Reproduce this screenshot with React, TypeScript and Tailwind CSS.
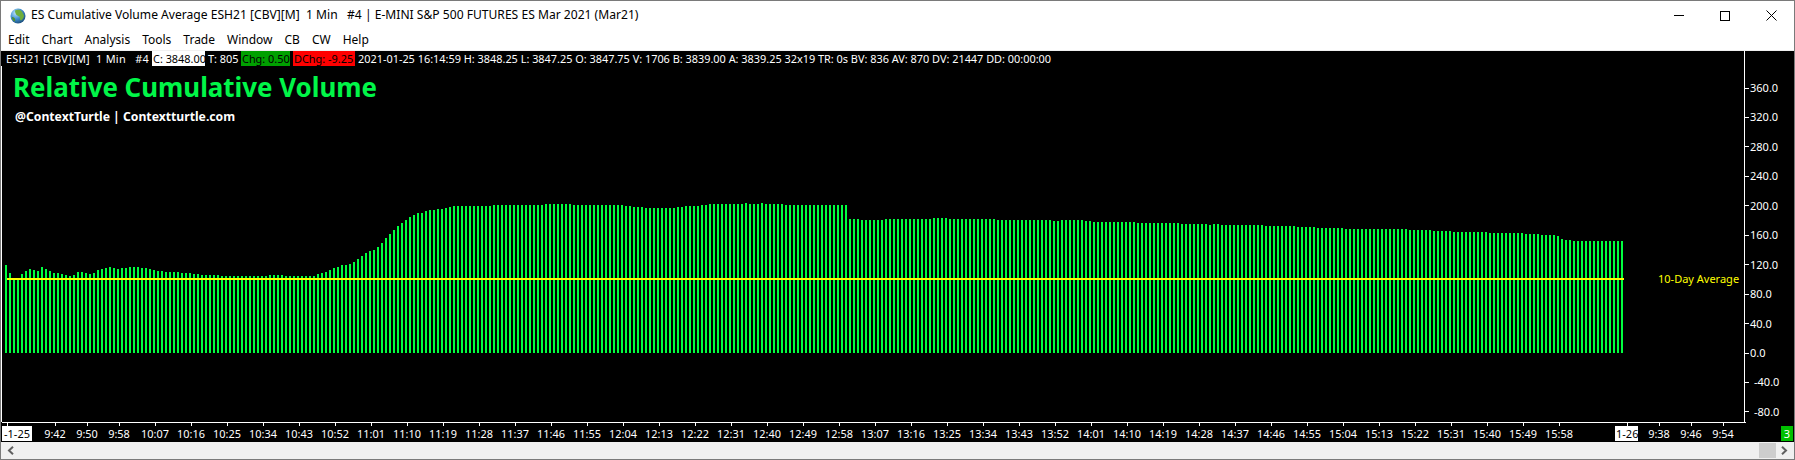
const font = '[font-family:"Noto_Sans",sans-serif]'

// bar tops as [pageY, count], one bar every 4px starting at x=5
const SEGMENTS: [number, number][] = [
  [265, 1], [273, 1], [279, 2], [274, 1], [271, 1], [269, 1], [270, 1], [271, 1], [267, 1], [269, 1], [271, 1],
  [273, 2], [274, 1], [275, 1], [276, 1], [275, 1], [272, 2], [273, 1], [274, 1], [273, 1], [270, 1], [269, 1],
  [268, 1], [267, 1], [268, 1], [269, 1], [268, 2], [267, 3], [268, 2], [269, 1], [270, 1], [271, 2], [272, 4],
  [273, 3], [274, 2], [275, 5], [276, 12], [275, 4], [276, 8], [274, 1], [273, 1], [272, 1], [270, 1], [268, 1],
  [267, 1], [265, 2], [264, 1], [262, 1], [259, 1], [256, 1], [253, 1], [251, 1], [250, 1], [247, 1], [243, 1],
  [238, 1], [234, 1], [230, 1], [226, 1], [223, 1], [220, 1], [217, 1], [215, 1], [213, 2], [211, 1], [210, 2],
  [209, 2], [208, 1], [207, 1], [206, 10], [205, 13], [204, 7], [205, 13], [206, 2], [207, 3], [208, 8], [207, 2],
  [206, 4], [205, 2], [204, 9], [203, 1], [204, 3], [203, 1], [204, 5], [205, 16], [219, 3], [220, 6], [219, 12],
  [218, 4], [219, 12], [220, 14], [221, 2], [220, 6], [221, 2], [222, 11], [223, 11], [224, 7], [225, 1], [224, 2],
  [225, 11], [226, 8], [227, 5], [228, 7], [229, 16], [230, 6], [231, 5], [232, 9], [233, 9], [234, 4], [235, 4],
  [236, 1], [239, 1], [240, 2], [241, 13],
]
const TOPS = SEGMENTS.flatMap(([top, count]) => Array<number>(count).fill(top))

const MENU = ['Edit', 'Chart', 'Analysis', 'Tools', 'Trade', 'Window', 'CB', 'CW', 'Help']
const Y_LABELS = [360, 320, 280, 240, 200, 160, 120, 80, 40, 0, -40, -80]

function clock(total: number) {
  return `${Math.floor(total / 60)}:${String(total % 60).padStart(2, '0')}`
}

const TIME_TICKS = [
  { x: 54, label: '9:42' },
  { x: 86, label: '9:50' },
  { x: 118, label: '9:58' },
  ...Array.from({ length: 40 }, (_, k) => ({ x: 154 + 36 * k, label: clock(607 + 9 * k) })),
  { x: 1658, label: '9:38' },
  { x: 1690, label: '9:46' },
  { x: 1722, label: '9:54' },
]

function Globe() {
  return (
    <svg width="16" height="16" viewBox="0 0 16 16" className="shrink-0">
      <defs>
        <radialGradient id="sea" cx="0.35" cy="0.3" r="0.8">
          <stop offset="0" stopColor="#bfe6ff" />
          <stop offset="0.5" stopColor="#3f8fd0" />
          <stop offset="1" stopColor="#17456f" />
        </radialGradient>
      </defs>
      <circle cx="8" cy="8" r="7.5" fill="url(#sea)" />
      <path d="M5 2.5c2-1 5-1 6.5.5.8 1.5 2 2.5 2.5 5-.5 2-1.5 3.5-3 4.5-1-.5-1.5-2-1-3.5-1-1-2.5-1-3.5-2C5.5 6 5 4 5 2.5z" fill="#6fae3c" />
      <path d="M2 9c1 0 2.5.5 3 2s0 2.5-.5 2.5C3 13 2 11 2 9z" fill="#4f8f30" />
    </svg>
  )
}

function TitleBar() {
  return (
    <div className="flex h-[29px] items-center bg-white pl-[9px]">
      <Globe />
      <span className="ml-[5px] whitespace-pre text-[12.1px] text-black">
        ES Cumulative Volume Average ESH21 [CBV][M]  1 Min   #4 | E-MINI S&amp;P 500 FUTURES ES Mar 2021 (Mar21)
      </span>
      <div className="ml-auto flex">
        <div className="flex h-[29px] w-[46px] items-center justify-center">
          <div className="h-px w-[10px] bg-black" />
        </div>
        <div className="flex h-[29px] w-[46px] items-center justify-center">
          <div className="h-[10px] w-[10px] border border-black" />
        </div>
        <div className="flex h-[29px] w-[46px] items-center justify-center">
          <svg width="11" height="11" viewBox="0 0 11 11">
            <path d="M.5.5l10 10M10.5.5l-10 10" stroke="#000" strokeWidth="1" fill="none" />
          </svg>
        </div>
      </div>
    </div>
  )
}

function StatusStrip() {
  return (
    <div className="flex h-[15px] items-center whitespace-pre pl-[5px] text-[10.9px] leading-[15px] text-white">
      <span className="w-[146px] tracking-[0.27px]">ESH21 [CBV][M]  1 Min   #4</span>
      <span className="h-[15px] w-[53px] overflow-hidden bg-white pl-[1px] text-black">C: 3848.00</span>
      <span className="w-[36px] pl-[3px]">T: 805</span>
      <span className="h-[15px] w-[49px] overflow-hidden bg-[#00a000] pl-[1px] text-black">Chg: 0.50</span>
      <span className="ml-[3px] h-[15px] w-[62px] overflow-hidden bg-[#ff0000] pl-[1px] text-black">DChg: -9.25</span>
      <span className="ml-[3px]">
        2021-01-25 16:14:59 H: 3848.25 L: 3847.25 O: 3847.75 V: 1706 B: 3839.00 A: 3839.25 32x19 TR: 0s BV: 836 AV: 870 DV: 21447 DD: 00:00:00
      </span>
    </div>
  )
}

function Plot() {
  return (
    <div className="relative flex-1 overflow-hidden border-l border-white pl-[11px]">
      <svg width="1742" height="356" viewBox="2 66 1742 356" className="absolute left-0 top-0" shapeRendering="crispEdges">
        {TOPS.map((top, i) => (
          <rect key={i} x={5 + 4 * i} y={top} width="2" height={353 - top} fill="#00ff40" />
        ))}
        <rect x="7" y="278" width="1617" height="2" fill="#ffff00" />
      </svg>
      <div className="relative pt-[4px] text-[25.9px] font-bold leading-[34px] text-[#00f648]">Relative Cumulative Volume</div>
      <div className="relative pl-[2px] pt-[4px] text-[12.2px] font-bold leading-[18px] text-white">@ContextTurtle | Contextturtle.com</div>
      <span className="absolute left-[1656px] top-[204px] whitespace-pre text-[11px] leading-[18px] text-[#ffff00]">10-Day Average</span>
    </div>
  )
}

function YAxis() {
  return (
    <div className="relative h-[371px] w-[50px] border-l border-white">
      {Y_LABELS.map((value) => {
        const y = 353 - 51 - value * 0.736
        return (
          <div key={value} className="absolute left-0 flex items-center" style={{ top: y - 8 }}>
            <div className="h-px w-[4px] bg-white" />
            <span className={`text-[11px] leading-[16px] text-white ${value < 0 ? 'pl-[5px]' : 'pl-[1px]'}`}>{value.toFixed(1)}</span>
          </div>
        )
      })}
    </div>
  )
}

function TimeAxis() {
  return (
    <div className="relative h-[20px] shrink-0">
      <div className="absolute left-[1px] top-0 h-px w-[1744px] bg-white" />
      {TIME_TICKS.map(({ x, label }) => (
        <div key={label + x}>
          <div className="absolute top-[1px] h-[3px] w-px bg-white" style={{ left: x }} />
          <span className="absolute top-[4px] -translate-x-1/2 whitespace-pre text-[10.9px] leading-[15px] text-white" style={{ left: x }}>
            {label}
          </span>
        </div>
      ))}
      <div className="absolute left-[6px] top-[1px] h-[3px] w-px bg-white" />
      <span className="absolute left-[1px] top-[4px] h-[15px] w-[30px] overflow-hidden bg-white text-center text-[11px] leading-[15px] text-black">-1-25</span>
      <div className="absolute left-[1626px] top-[1px] h-[3px] w-px bg-white" />
      <span className="absolute left-[1614px] top-[4px] h-[15px] w-[23px] overflow-hidden whitespace-pre bg-white pl-[1px] text-[11px] leading-[15px] text-black">1-26</span>
      <span className="absolute left-[1780px] top-[4px] h-[15px] w-[12px] bg-[#00c000] text-center text-[11px] leading-[15px] text-white">3</span>
    </div>
  )
}

function ScrollBar() {
  return (
    <div className="flex h-[17px] items-center bg-[#f0f0f0] pl-[6px] pr-[2px]">
      <svg width="7" height="9" viewBox="0 0 7 9">
        <path d="M6 .8L2 4.5 6 8.2" stroke="#606060" strokeWidth="2" fill="none" />
      </svg>
      <div className="ml-auto h-[15px] w-[17px] bg-[#cdcdcd]" />
      <div className="flex w-[16px] justify-center">
        <svg width="7" height="9" viewBox="0 0 7 9">
          <path d="M1 .8L5 4.5 1 8.2" stroke="#606060" strokeWidth="2" fill="none" />
        </svg>
      </div>
    </div>
  )
}

export default function App() {
  return (
    <div className={`flex h-[460px] w-[1795px] flex-col overflow-hidden border border-[#7a7a7a] ${font}`}>
      <TitleBar />
      <div className="flex h-[20px] items-center bg-white pl-[1px] text-[12px] text-black">
        {MENU.map((item) => (
          <span key={item} className="px-[6px]">{item}</span>
        ))}
      </div>
      <div className="h-px bg-[#f0f0f0]" />
      <div className="flex flex-1 flex-col bg-black">
        <div className="flex flex-1">
          <div className="flex w-[1743px] flex-col">
            <StatusStrip />
            <Plot />
          </div>
          <YAxis />
        </div>
        <TimeAxis />
      </div>
      <ScrollBar />
    </div>
  )
}
